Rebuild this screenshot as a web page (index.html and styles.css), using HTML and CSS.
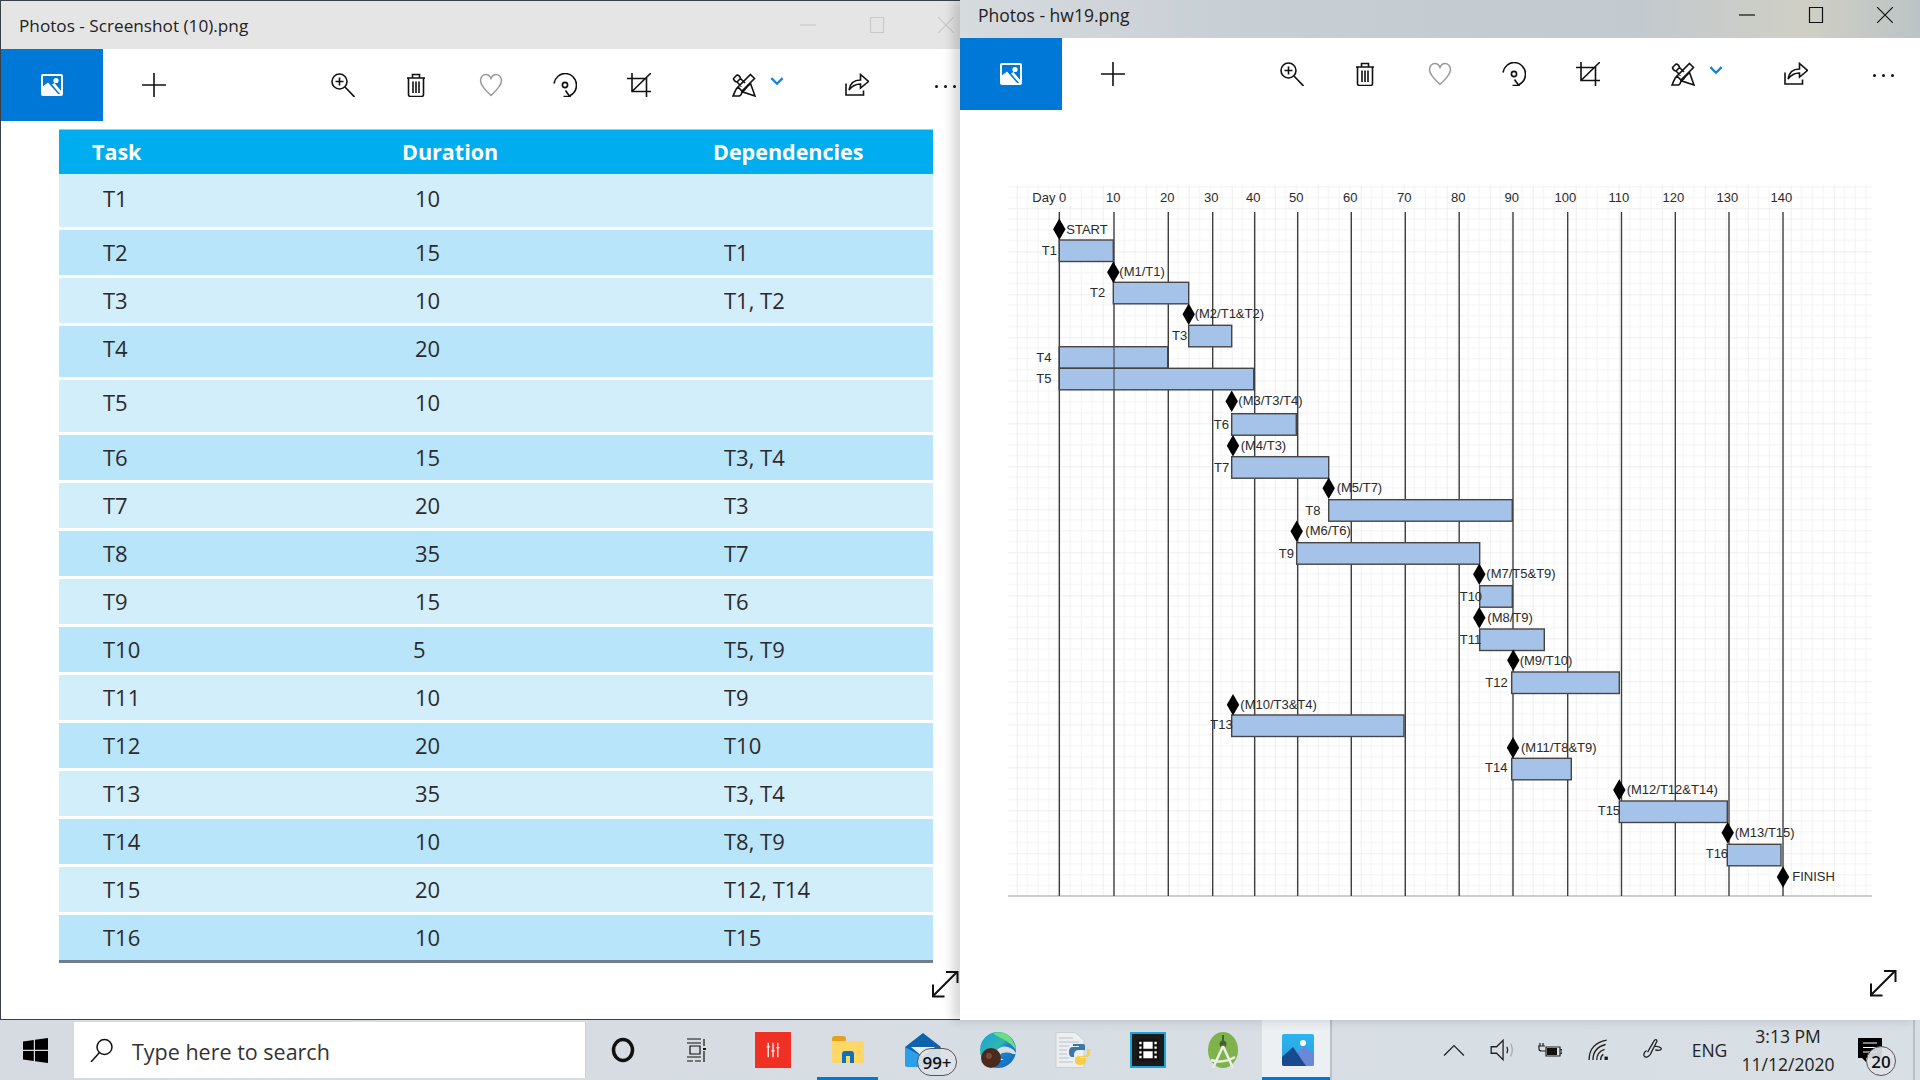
FILE: index.html
```html
<!DOCTYPE html>
<html lang="en">
<head>
<meta charset="utf-8">
<title>Photos</title>
<link rel="stylesheet" href="styles.css">
</head>
<body>
<svg class="defs" width="0" height="0" aria-hidden="true">
  <defs>
    <symbol id="i-photo" viewBox="0 0 24 24"><rect class="w-line" x="2" y="2" width="20" height="20" rx="1"/><circle class="w-fill" cx="16" cy="7.5" r="2.6"/><path class="w-fill" d="M2 14 8 9.5 19 22H2ZM12 11.5l2.5-1.5L22 19v3h-1Z"/></symbol>
    <symbol id="i-plus" viewBox="0 0 24 24"><path class="ln" d="M0 12H24M12 0V24"/></symbol>
    <symbol id="i-zoom" viewBox="0 0 24 24"><circle class="ln" cx="8.5" cy="8.5" r="7.5"/><path class="ln" d="M14 14 23.5 24M8.5 4.5v8M4.5 8.5h8"/></symbol>
    <symbol id="i-trash" viewBox="0 0 24 24"><path class="ln" d="M3 5H21M8.5 5V1.5h7V5M4.500 5V21.5q0 2 2 2H17.5q2 0 2-2V5M9 8.5V20M12 8.5V20M15 8.5V20"/></symbol>
    <symbol id="i-heart" viewBox="0 0 24 24"><path class="ln-grey" d="M12 22.5C6 17 1.5 12 1.5 7.5 1.5 4 4 1.5 7 1.5 9.5 1.5 11 3 12 5.5 13 3 14.500 1.500 17 1.500 20 1.500 22.500 4 22.500 7.500 22.500 12 18 17 12 22.500Z"/></symbol>
    <symbol id="i-rotate" viewBox="0 0 24 24"><path class="ln" d="M1 10.500C2 4.500 7 .5 12 .5 18.500.5 23.500 6 23.500 12 23.500 17 20.500 21 16.500 23"/><circle class="ln" cx="12" cy="12" r="2.600"/><path class="ln" d="M12.500 17.500 16.800 23.500H10.500"/></symbol>
    <symbol id="i-crop" viewBox="0 0 24 24"><path class="ln" d="M0 5.500H19.500V24M5 0V18.500H24M5 18.500 24 0"/></symbol>
    <symbol id="i-edit" viewBox="0 0 24 24"><path class="ln" d="M18.500 1.500 22.500 5.500 10 18 6 14ZM6 14C3.500 15.500 3 19 1 23H7.500C9.500 22 10 20 10 18M1.500 5.500 5 2C6.500 2 8.500 4 8.500 5.500L5 9C3.500 9 1.500 7 1.500 5.500ZM5 9 9.500 13.500M8.500 5.500 13 10M14.500 14.500 18.500 10.500 23 23 11 19Z"/></symbol>
    <symbol id="i-share" viewBox="0 0 24 24"><path class="ln" d="M1 10.500V22H18.500V17.500M4 17C5 10.500 9 7 15.500 7V1.500L23.500 8.500 15.500 15V11C10.500 11 7 13 4 17Z"/></symbol>
    <symbol id="i-expand" viewBox="0 0 28 28"><path class="ln-bold" d="M2 26 26 2M15 2H26.500V13M2 14.500V26.500H13.500"/></symbol>
    <linearGradient id="g-edge" x1="0" y1="0" x2="1" y2="1"><stop offset="0" stop-color="#1a9fd8"/><stop offset=".45" stop-color="#2fb8b0"/><stop offset=".55" stop-color="#1c86d0"/><stop offset="1" stop-color="#1266b8"/></linearGradient>
    <linearGradient id="g-photo" x1="0" y1="0" x2="0" y2="1"><stop offset="0" stop-color="#2bb5ef"/><stop offset="1" stop-color="#2a9fe0"/></linearGradient>
    <path id="dia" d="M0-10.700 6.200 0 0 10.700-6.200 0Z"/>
    <pattern id="grid" patternUnits="userSpaceOnUse" x="1016.700" y="208.300" width="43" height="43">
      <path class="minor" d="M10.750 0V43M21.500 0V43M32.250 0V43M0 10.750H43M0 21.500H43M0 32.250H43"/>
      <path class="major" d="M0 0V43M0 0H43"/>
    </pattern>
  </defs>
</svg>

<div class="desktop">
  <section class="window window-back">
    <header class="titlebar">
      <span class="title">Photos - Screenshot (10).png</span>
      <div class="controls">
        <svg class="ctl ctl-min" viewBox="0 0 16 16"><path d="M0 8H16"/></svg>
        <svg class="ctl ctl-max" viewBox="0 0 16 16"><path d="M1.500.5H14.500V15.500H1.500Z"/></svg>
        <svg class="ctl ctl-close" viewBox="0 0 16 16"><path d="M0 0 16 16M16 0 0 16"/></svg>
      </div>
    </header>
    <nav class="toolbar">
      <div class="tile"><svg class="ic-photo"><use href="#i-photo"/></svg></div>
      <div class="btn m-plus"><svg class="ic"><use href="#i-plus"/></svg></div>
      <div class="btn m-zoom"><svg class="ic"><use href="#i-zoom"/></svg></div>
      <div class="btn m-33"><svg class="ic"><use href="#i-trash"/></svg></div>
      <div class="btn m-35"><svg class="ic"><use href="#i-heart"/></svg></div>
      <div class="btn m-34"><svg class="ic"><use href="#i-rotate"/></svg></div>
      <div class="btn m-34"><svg class="ic"><use href="#i-crop"/></svg></div>
      <div class="btn m-edit"><svg class="ic"><use href="#i-edit"/></svg></div>
      <svg class="chev" viewBox="0 0 12 8"><path d="M1 1 6 6 11 1"/></svg>
      <div class="btn m-share"><svg class="ic"><use href="#i-share"/></svg></div>
      <div class="dots m-dots"><i></i><i></i><i></i></div>
    </nav>
    <div class="table">
      <div class="thead"><span>Task</span><span>Duration</span><span>Dependencies</span></div>
      <div class="row first"><span>T1</span><span>10</span><span></span></div>
      <div class="row"><span>T2</span><span>15</span><span>T1</span></div>
      <div class="row"><span>T3</span><span>10</span><span>T1, T2</span></div>
      <div class="row tall-a"><span>T4</span><span>20</span><span></span></div>
      <div class="row tall-b"><span>T5</span><span>10</span><span></span></div>
      <div class="row"><span>T6</span><span>15</span><span>T3, T4</span></div>
      <div class="row"><span>T7</span><span>20</span><span>T3</span></div>
      <div class="row"><span>T8</span><span>35</span><span>T7</span></div>
      <div class="row"><span>T9</span><span>15</span><span>T6</span></div>
      <div class="row"><span>T10</span><span class="narrow">5</span><span>T5, T9</span></div>
      <div class="row"><span>T11</span><span>10</span><span>T9</span></div>
      <div class="row"><span>T12</span><span>20</span><span>T10</span></div>
      <div class="row"><span>T13</span><span>35</span><span>T3, T4</span></div>
      <div class="row"><span>T14</span><span>10</span><span>T8, T9</span></div>
      <div class="row"><span>T15</span><span>20</span><span>T12, T14</span></div>
      <div class="row"><span>T16</span><span>10</span><span>T15</span></div>
    </div>
    <div class="table-edge"></div>
    <svg class="expand expand-back"><use href="#i-expand"/></svg>
  </section>

  <section class="window window-front">
    <header class="titlebar">
      <span class="title">Photos - hw19.png</span>
      <div class="controls">
        <svg class="ctl ctl-min" viewBox="0 0 16 16"><path d="M0 8H16"/></svg>
        <svg class="ctl ctl-max" viewBox="0 0 16 16"><path d="M1.500.5H14.500V15.500H1.500Z"/></svg>
        <svg class="ctl ctl-close" viewBox="0 0 16 16"><path d="M0 0 16 16M16 0 0 16"/></svg>
      </div>
    </header>
    <nav class="toolbar">
      <div class="tile"><svg class="ic-photo"><use href="#i-photo"/></svg></div>
      <div class="btn m-plus"><svg class="ic"><use href="#i-plus"/></svg></div>
      <div class="btn m-zoom"><svg class="ic"><use href="#i-zoom"/></svg></div>
      <div class="btn m-33"><svg class="ic"><use href="#i-trash"/></svg></div>
      <div class="btn m-35"><svg class="ic"><use href="#i-heart"/></svg></div>
      <div class="btn m-34"><svg class="ic"><use href="#i-rotate"/></svg></div>
      <div class="btn m-34"><svg class="ic"><use href="#i-crop"/></svg></div>
      <div class="btn m-edit"><svg class="ic"><use href="#i-edit"/></svg></div>
      <svg class="chev" viewBox="0 0 12 8"><path d="M1 1 6 6 11 1"/></svg>
      <div class="btn m-share"><svg class="ic"><use href="#i-share"/></svg></div>
      <div class="dots m-dots"><i></i><i></i><i></i></div>
    </nav>
    <svg class="gantt" viewBox="1008 185 864 715" width="864" height="715">
      <rect x="1008" y="185" width="864" height="711" fill="url(#grid)"/>
      <path class="axis" d="M1008 896H1872"/>
      <path class="day" d="M1059.300 212V896M1114 212V896M1168.300 212V896M1212.700 212V896M1254.700 212V896M1297.700 212V896M1351.300 212V896M1405.300 212V896M1459.200 212V896M1513 212V896M1567.700 212V896M1621.500 212V896M1675.300 212V896M1729 212V896M1783 212V896"/>
      <g class="gtext">
        <text x="1032.300" y="197">Day 0</text>
        <text x="1106" y="197">10</text>
        <text x="1160" y="197">20</text>
        <text x="1204" y="197">30</text>
        <text x="1246" y="197">40</text>
        <text x="1289" y="197">50</text>
        <text x="1343" y="197">60</text>
        <text x="1397" y="197">70</text>
        <text x="1451" y="197">80</text>
        <text x="1504.500" y="197">90</text>
        <text x="1554.500" y="197">100</text>
        <text x="1608.500" y="197">110</text>
        <text x="1662.500" y="197">120</text>
        <text x="1716.500" y="197">130</text>
        <text x="1770.500" y="197">140</text>
      </g>
      <g class="bars">
        <rect x="1059.300" y="240" width="54" height="21.500"/>
        <rect x="1113.300" y="282.300" width="75.400" height="21.500"/>
        <rect x="1188.700" y="325.300" width="43" height="21.500"/>
        <rect x="1059.300" y="346.700" width="108.400" height="21.500"/>
        <rect x="1059.300" y="368.300" width="194.400" height="21.500"/>
        <rect x="1231.700" y="413.700" width="64.600" height="21.500"/>
        <rect x="1231.700" y="456.700" width="97" height="21.500"/>
        <rect x="1328.700" y="499.700" width="183.600" height="21.500"/>
        <rect x="1296.700" y="542.700" width="183" height="21.500"/>
        <rect x="1479.700" y="585.700" width="32.600" height="21.500"/>
        <rect x="1479.700" y="629" width="64.600" height="21.500"/>
        <rect x="1511.700" y="672" width="107.600" height="21.500"/>
        <rect x="1231.700" y="715" width="172.300" height="21.500"/>
        <rect x="1511.700" y="758.300" width="59.600" height="21.500"/>
        <rect x="1619.300" y="801" width="108" height="21.500"/>
        <rect x="1727.300" y="844.300" width="53.700" height="21.500"/>
      </g>
      <path class="day-over" d="M1059.300 346.700V389.800M1114 346.700V389.800"/>
      <g class="diamonds">
        <use href="#dia" x="1059.300" y="229.300"/>
        <use href="#dia" x="1113.300" y="272.300"/>
        <use href="#dia" x="1188.700" y="314.300"/>
        <use href="#dia" x="1231.700" y="401.300"/>
        <use href="#dia" x="1233" y="445.700"/>
        <use href="#dia" x="1328.700" y="488.300"/>
        <use href="#dia" x="1296.700" y="531.300"/>
        <use href="#dia" x="1479.300" y="574.300"/>
        <use href="#dia" x="1479.300" y="617.700"/>
        <use href="#dia" x="1513.300" y="660.300"/>
        <use href="#dia" x="1233" y="704.700"/>
        <use href="#dia" x="1513" y="747.700"/>
        <use href="#dia" x="1619.300" y="790"/>
        <use href="#dia" x="1727.700" y="832.700"/>
        <use href="#dia" x="1783" y="877"/>
      </g>
      <g class="gtext labels">
        <text x="1066.300" y="229.700">START</text>
        <text x="1119.300" y="272">(M1/T1)</text>
        <text x="1194.700" y="314">(M2/T1&amp;T2)</text>
        <text x="1238.300" y="401">(M3/T3/T4)</text>
        <text x="1240.700" y="445.700">(M4/T3)</text>
        <text x="1336.700" y="488.300">(M5/T7)</text>
        <text x="1305.300" y="531">(M6/T6)</text>
        <text x="1486.300" y="574">(M7/T5&amp;T9)</text>
        <text x="1487.300" y="617.700">(M8/T9)</text>
        <text x="1519.700" y="660.700">(M9/T10)</text>
        <text x="1240.300" y="704.700">(M10/T3&amp;T4)</text>
        <text x="1521" y="747.700">(M11/T8&amp;T9)</text>
        <text x="1626.700" y="790">(M12/T12&amp;T14)</text>
        <text x="1734.700" y="832.700">(M13/T15)</text>
        <text x="1792.300" y="877">FINISH</text>
        <text x="1041.700" y="251">T1</text>
        <text x="1090" y="293.300">T2</text>
        <text x="1172" y="336">T3</text>
        <text x="1036.300" y="358.300">T4</text>
        <text x="1036.300" y="379.300">T5</text>
        <text x="1213.700" y="425">T6</text>
        <text x="1214" y="468">T7</text>
        <text x="1305.300" y="511">T8</text>
        <text x="1278.700" y="554.300">T9</text>
        <text x="1459.700" y="597.300">T10</text>
        <text x="1459.700" y="640.300">T11</text>
        <text x="1485.300" y="683.300">T12</text>
        <text x="1210.300" y="725.300">T13</text>
        <text x="1485" y="768.300">T14</text>
        <text x="1597.700" y="811.300">T15</text>
        <text x="1705.700" y="854.300">T16</text>
      </g>
    </svg>
    <svg class="expand expand-front"><use href="#i-expand"/></svg>
  </section>
</div>

<footer class="taskbar">
  <div class="start">
    <svg class="win-logo" viewBox="0 0 25 25"><path d="M0 3.500 10.800 2V11.800H0ZM12 1.800 25 0V11.800H12ZM0 13H10.800V23L0 21.500ZM12 13H25V25L12 23.200Z"/></svg>
  </div>
  <div class="search">
    <svg class="search-ic" viewBox="0 0 24 24"><circle cx="14.500" cy="9" r="7.500"/><path d="M9.500 14.500 1 24"/></svg>
    <span class="search-text">Type here to search</span>
  </div>
  <div class="slot"><svg class="cortana" viewBox="0 0 24 26"><ellipse cx="12" cy="13" rx="9.500" ry="10.500"/></svg></div>
  <div class="slot"><svg class="taskview" viewBox="0 0 24 24"><path d="M4 1H18M4 5H18M7 8H17V16H7ZM4 19H18M4 23H10M12 23H18M21 1V8M21 13V24"/><rect class="dot" x="20" y="10" width="3" height="2"/></svg></div>
  <div class="slot"><div class="red-tile"><svg viewBox="0 0 20 24"><path d="M4 3V21M10 3V21M16 3V21M2 8H6M8 13H12M14 9H18"/></svg></div></div>
  <div class="slot running">
    <svg class="app-32" viewBox="0 0 32 28"><path fill="#e3a11e" d="M0 3Q0 0 3 0H11Q14 0 14 3V5H0Z"/><path fill="#ffd767" d="M0 5H32V25Q32 27 30 27H2Q0 27 0 25Z"/><path fill="#0c6fbf" d="M10 27V18Q10 15 13 15H19Q22 15 22 18V27H18V20H14V27Z"/></svg>
  </div>
  <div class="slot">
    <svg class="app-36" viewBox="0 0 36 34"><path fill="#2b9fe8" d="M0 14V32Q0 34 2 34H34Q36 34 36 32V14Z"/><path fill="#0f62ae" d="M0 14 18 0 36 14 18 24Z"/><path fill="#e9eef2" d="M6 14H30L18 24Z"/></svg>
    <span class="badge badge-mail">99+</span>
  </div>
  <div class="slot">
    <svg class="app-36" viewBox="0 0 36 36"><circle cx="18" cy="18" r="18" fill="url(#g-edge)"/><path fill="#6fdc80" d="M13 1.500C24-3 35 6 36 19 33 11 22 7 13 1.500Z"/><path fill="#d6dde3" d="M15 23C15 17 22 13 28 15 33 16.500 36 20 36 22L33 22C28 20 22 20 20 23 19 25 21 27 24 28L18 28C16 27 15 25 15 23Z"/><circle cx="11" cy="26" r="10" fill="#4a2a1c"/><circle cx="9" cy="24" r="3" fill="#7a4a30"/></svg>
  </div>
  <div class="slot">
    <svg class="app-36" viewBox="0 0 36 36"><path fill="#eceff1" stroke="#c9cfd3" d="M1 .5H20L29 8V35.500H1Z"/><path stroke="#bbc2c7" d="M4 6H18M4 10H24M4 14H14M4 18H12M4 22H12M4 26H14M4 30H18"/><path fill="#3a76a8" d="M18 12H28Q30 12 30 14V18H24Q19 18 19 23V25H17Q14 25 14 20 14 15 18 15H24V14H18Z"/><path fill="#f7cf4a" d="M32 17H35Q36 25 31 25H25V26H31V30Q31 33 25 33 20 33 20 30V27Q20 24 25 24H30Q32 24 32 20Z"/></svg>
  </div>
  <div class="slot">
    <div class="film"><svg viewBox="0 0 24 24"><path class="strip" d="M3 3H21V21H3Z"/><path class="frame" d="M8 5H16V11H8ZM8 13H16V19H8ZM4.500 5H6.500V7H4.500ZM4.500 9H6.500V11H4.500ZM4.500 13H6.500V15H4.500ZM4.500 17H6.500V19H4.500ZM17.500 5H19.500V7H17.500ZM17.500 9H19.500V11H17.500ZM17.500 13H19.500V15H17.500ZM17.500 17H19.500V19H17.500Z"/></svg></div>
  </div>
  <div class="slot">
    <svg class="app-36" viewBox="0 0 36 36"><ellipse cx="18" cy="18" rx="15" ry="18" fill="#7fb24a"/><circle cx="18" cy="12" r="3.500" fill="#44622f"/><path stroke="#e9efe2" stroke-width="2.500" fill="none" d="M18 14 8 36M18 14 28 36M6 28Q18 32 30 25"/><path stroke="#44622f" stroke-width="2" d="M18 3V9"/></svg>
  </div>
  <div class="slot active">
    <svg class="app-32 photos-ic" viewBox="0 0 32 32"><rect width="32" height="32" rx="2" fill="url(#g-photo)"/><circle cx="21" cy="9" r="3" fill="#fff"/><path fill="#6a87d8" d="M14 19 23 12 32 21V30Q32 32 30 32H14Z"/><path fill="#174a8e" d="M0 23 11 13 24 32H2Q0 32 0 30Z"/></svg>
  </div>
  <div class="sep"></div>
  <div class="tray">
    <div class="t-slot w48"><svg class="tic" viewBox="0 0 20 20"><path d="M1 15 10 6 19 15"/></svg></div>
    <div class="t-slot w48"><svg class="tic tic-speaker" viewBox="0 0 24 24"><path d="M2 9H7L13 3V21L7 15H2ZM16.500 9Q18 12 16.500 15"/><path class="soft" d="M20 6Q23 12 20 18"/></svg></div>
    <div class="t-slot w48"><svg class="tic tic-wide" viewBox="0 0 24 16"><path d="M8 5H22V14H8ZM22 7.500H24V11.500H22ZM0 4H7M2 1V4M5 1V4M1 4V7Q1 9 4 9H8"/><rect class="solid" x="9" y="6" width="10" height="7"/></svg></div>
    <div class="t-slot w50"><svg class="tic" viewBox="0 0 20 20"><path d="M1 19Q1 4 17 1M4.500 19Q4.500 8 16 5M8 19Q8 12 15 9.500M11.500 19Q11.500 15.500 14 14"/><rect class="solid" x="15" y="16" width="3" height="3"/></svg></div>
    <div class="t-slot w56"><svg class="tic" viewBox="0 0 20 20"><path d="M6 12 12 1.500Q14-.5 14.500 2L8.500 14Q5 18 3 15.500 1.500 13 5 10.500M12 6.500Q18 7 18.500 9 18 11 13 10"/></svg></div>
    <div class="t-slot w59 eng">ENG</div>
    <div class="clock"><span>3:13 PM</span><span>11/12/2020</span></div>
    <div class="notif">
      <svg class="notif-ic" viewBox="0 0 24 24"><path class="bub" d="M0 0H24V20H8V24L4 20H0Z"/><path class="lines" d="M5 5H19M5 9.500H19M5 14H19"/></svg>
      <span class="badge badge-notif">20</span>
    </div>
    <div class="sep sep-end"></div>
  </div>
</footer>
</body>
</html>
```
FILE: styles.css
```css
* { box-sizing: border-box; }
html, body { margin: 0; padding: 0; }
body {
  width: 1920px;
  height: 1080px;
  overflow: hidden;
  display: flex;
  flex-direction: column;
  font-family: "Open Sans", "Noto Sans", sans-serif;
  background: #fff;
}
.defs { position: absolute; }

.desktop { display: flex; height: 1020px; }

.window { position: relative; width: 960px; height: 1020px; background: #fff; overflow: hidden; }
.window-back { border: 1px solid #3a4046; border-right: 0; }
.window-front { box-shadow: -7px 0 10px rgba(0,0,0,.16); overflow: visible; z-index: 2; }

.titlebar { display: flex; align-items: center; justify-content: space-between; }
.window-back .titlebar { height: 48px; background: #e5e5e5; padding-left: 18px; }
.window-front .titlebar {
  height: 38px;
  padding: 0 0 8px 18px;
  background: linear-gradient(90deg, #d6dbde 0, #c7ced4 30%, #c2c9cf 70%, #cfcfc4 88%, #bcc4c6 100%);
}
.title { font-size: 17.5px; color: #222; white-space: nowrap; }
.window-back .title { font-size: 17.2px; }

.controls { display: flex; align-items: center; }
.ctl { width: 16px; height: 16px; fill: none; stroke-width: 1.200; display: block; }
.ctl-min, .ctl-max { margin-right: 53px; }
.window-back .ctl { stroke: #c9c9c9; }
.window-back .ctl-close { margin-right: 6px; }
.window-front .ctl { stroke: #111; }
.window-front .ctl-close { margin-right: 27px; }

.toolbar { display: flex; align-items: center; height: 72px; }
.window-back .toolbar { width: 1000px; }
.tile { width: 102px; align-self: stretch; background: #0078d7; display: flex; align-items: center; justify-content: center; }
.ic-photo { width: 24px; height: 24px; }
.w-line { fill: none; stroke: #fff; stroke-width: 2; }
.w-fill { fill: #fff; }
.btn { width: 40px; height: 40px; flex: none; display: flex; align-items: center; justify-content: center; }
.ic { width: 24px; height: 24px; }
.ln { fill: none; stroke: #111; stroke-width: 1.600; }
.ln-grey { fill: none; stroke: #9a9a9a; stroke-width: 1.500; }
.ln-bold { fill: none; stroke: #111; stroke-width: 2; }
.m-plus { margin-left: 31px; }
.m-zoom { margin-left: 139px; }
.m-33 { margin-left: 33px; }
.m-34 { margin-left: 34px; }
.m-35 { margin-left: 35px; }
.m-edit { margin-left: 55px; }
.m-share { margin-left: 53px; }
.m-dots { margin-left: 47px; }
.window-back .m-zoom { margin-left: 149px; }
.window-back .m-edit { margin-left: 65px; }
.window-back .m-dots { margin-left: 48px; }
.chev { width: 14px; height: 9px; margin: 0 0 8px 6px; flex: none; fill: none; stroke: #0a84e0; stroke-width: 2; }
.dots { width: 40px; display: flex; justify-content: center; gap: 6px; padding-top: 2px; }
.dots i { width: 3px; height: 3px; background: #111; border-radius: 50%; }

.table { margin: 8px 0 0 58px; width: 874px; }
.thead, .row { display: grid; }
.thead {
  grid-template-columns: 310px 311px 1fr;
  height: 45px;
  padding-left: 33px;
  background: #00aeef;
  border-top: 1px solid #7fd3f5;
  color: #fff;
  font-weight: 700;
  font-size: 21.500px;
  line-height: 44px;
}
.row {
  grid-template-columns: 312px 309px 1fr;
  height: 45px;
  margin-top: 3px;
  padding-left: 44px;
  background: #b9e5fb;
  color: #2c2a2b;
  font-size: 22px;
  line-height: 45px;
}
.row:nth-child(even) { background: #d3eefb; }
.row.first { height: 53px; margin-top: 0; line-height: 48px; }
.row.tall-a { height: 51px; }
.row.tall-b { height: 52px; }
.narrow { margin-left: -2px; }
.table-edge { width: 874px; margin-left: 58px; height: 3px; background: #6f808c; }
.expand { position: absolute; width: 28px; height: 28px; top: 969px; }
.expand-back { left: 930px; }
.expand-front { left: 909px; }

.gantt { display: block; margin: 75px 0 0 48px; }
.minor { fill: none; stroke: #f3f3f3; stroke-width: 1; }
.major { fill: none; stroke: #e9e9e9; stroke-width: 1.500; }
.axis { stroke: #bcbcbc; stroke-width: 1.500; fill: none; }
.day { stroke: #3f3f3f; stroke-width: 1.400; fill: none; }
.day-over { stroke: #3f3f3f; stroke-width: 1; fill: none; }
.bars rect { fill: #a5c2e9; stroke: #454545; stroke-width: 1.400; }
.diamonds use { fill: #000; }
.gtext text {
  font-family: "Liberation Sans", Arial, sans-serif;
  font-size: 13px;
  fill: #2a2a2a;
  dominant-baseline: central;
}
.labels { transform: translateY(-.5px); }

.taskbar {
  display: flex;
  height: 60px;
  background: linear-gradient(90deg, #d5dbe1, #d8dfe5);
  align-items: center;
}
.start { width: 74px; flex: none; display: flex; justify-content: center; padding-right: 3px; }
.win-logo { width: 25px; height: 25px; fill: #000; }
.search {
  width: 512px;
  height: 56px;
  margin-right: -1px;
  flex: none;
  background: #fff;
  border-right: 1px solid #cfd3d6;
  display: flex;
  align-items: center;
  padding-left: 16px;
  gap: 18px;
  font-size: 21.500px;
  color: #333;
}
.search-text { padding-top: 2px; }
.search-ic { width: 24px; height: 24px; fill: none; stroke: #111; stroke-width: 1.500; }

.slot { position: relative; width: 75px; height: 60px; flex: none; display: flex; align-items: center; justify-content: center; }
.cortana { width: 24px; height: 26px; fill: none; stroke: #111; stroke-width: 3.500; }
.taskview { width: 24px; height: 26px; margin-right: 6px; fill: none; stroke: #111; stroke-width: 1.200; }
.taskview .dot { fill: #111; stroke: none; }
.red-tile { width: 36px; height: 36px; background: #ef3124; display: flex; align-items: center; justify-content: center; }
.red-tile svg { width: 16px; height: 20px; fill: none; stroke: #fff; stroke-width: 1.500; }
.app-32 { width: 32px; height: 32px; }
.app-36 { width: 36px; height: 36px; }
.photos-ic { margin-left: 3px; }
.running::after, .active::after {
  content: "";
  position: absolute;
  bottom: 0;
  height: 3px;
  background: #0078d7;
}
.running::after { left: 7px; right: 7px; }
.active { width: 68px; margin-left: 2px; background: #edf0f3; }
.active::after { left: 0; right: 0; }
.film { width: 36px; height: 36px; background: #1b1b1b; border: 2px solid #1aa7d8; display: flex; align-items: center; justify-content: center; }
.film svg { width: 28px; height: 28px; }
.strip { fill: #111; }
.frame { fill: #fff; }
.badge {
  position: absolute;
  display: flex;
  align-items: center;
  justify-content: center;
  border: 1px solid #555;
  border-radius: 50%;
  color: #111;
  background: rgba(222,226,230,.92);
  font-size: 17px;
  font-weight: 600;
}
.badge-mail { width: 40px; height: 28px; left: 32px; top: 28px; border-radius: 14px; }

.sep { width: 2px; height: 60px; flex: none; background: #b9c0c6; }
.tray { display: flex; align-items: center; height: 60px; margin-left: auto; padding-right: 5px; font-size: 18px; color: #222; }
.t-slot { display: flex; align-items: center; justify-content: center; height: 60px; flex: none; }
.w48 { width: 48px; }
.w50 { width: 50px; }
.w56 { width: 56px; }
.w59 { width: 59px; }
.tic { width: 22px; height: 22px; fill: none; stroke: #222; stroke-width: 1.200; }
.tic-wide { width: 24px; height: 16px; }
.tic-speaker { width: 26px; height: 26px; }
.tic .soft { stroke: #aaa; }
.tic .solid { fill: #111; stroke: none; }
.eng { font-size: 17.500px; }
.clock { width: 98px; flex: none; display: flex; flex-direction: column; align-items: center; font-size: 17.500px; gap: 5px; line-height: 23px; }
.notif { position: relative; width: 76px; height: 60px; flex: none; }
.notif-ic { position: absolute; left: 21px; top: 18px; width: 24px; height: 24px; }
.bub { fill: #000; }
.lines { stroke: #fff; stroke-width: 1.200; fill: none; }
.badge-notif { width: 30px; height: 30px; left: 29px; top: 26px; }
```
